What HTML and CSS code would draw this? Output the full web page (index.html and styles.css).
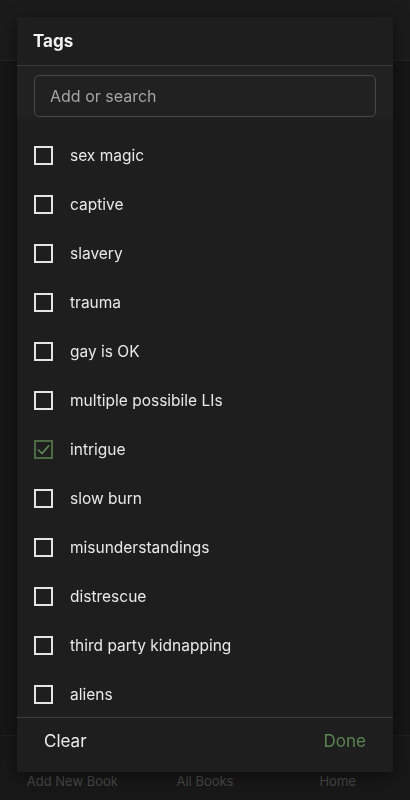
FILE: index.html
```html
<!DOCTYPE html>
<html>
<head>
    <link rel="stylesheet" href="styles.css">
</head>
<body>
    <div class="app">
        <div class="app-bar"></div>
        <div class="app-main"></div>
        <div class="bottom-nav">
            <div class="nav-link">Add New Book</div>
            <div class="nav-link">All Books</div>
            <div class="nav-link">Home</div>
        </div>
    </div>
    <div class="overlay">
        <div class="modal">
            <div class="modal-header">Tags</div>
            <div class="search-area">
                <div class="search-input">Add or search</div>
            </div>
            <div class="tag-list">
                <div class="tag"><span class="box"></span>sex magic</div>
                <div class="tag"><span class="box"></span>captive</div>
                <div class="tag"><span class="box"></span>slavery</div>
                <div class="tag"><span class="box"></span>trauma</div>
                <div class="tag"><span class="box"></span>gay is OK</div>
                <div class="tag"><span class="box"></span>multiple possibile LIs</div>
                <div class="tag"><span class="box checked"><svg width="15" height="15" viewBox="0 0 15 15"><path d="M2 7.5 L6 11.5 L13 3.5" fill="none" stroke="#5f8c57" stroke-width="1.6"/></svg></span>intrigue</div>
                <div class="tag"><span class="box"></span>slow burn</div>
                <div class="tag"><span class="box"></span>misunderstandings</div>
                <div class="tag"><span class="box"></span>distrescue</div>
                <div class="tag"><span class="box"></span>third party kidnapping</div>
                <div class="tag"><span class="box"></span>aliens</div>
            </div>
            <div class="modal-footer">
                <div class="btn-clear">Clear</div>
                <div class="btn-done">Done</div>
            </div>
        </div>
    </div>
</body>
</html>
```

FILE: styles.css
```css
body {
    margin: 0;
    padding: 0;
    background: #161616;
    font-family: Inter, "Noto Sans", sans-serif;
    width: 410px;
    height: 800px;
    overflow: hidden;
}

.app {
    display: flex;
    flex-direction: column;
    height: 800px;
}

.app-bar {
    height: 60px;
    background: #1b1b1b;
    border-bottom: 1px solid #242424;
}

.app-main {
    flex: 1;
    background: #161616;
}

.bottom-nav {
    height: 65px;
    background: #181818;
    border-top: 1px solid #202020;
    display: flex;
    justify-content: space-around;
    align-items: flex-end;
    padding: 0 6px 11px;
    box-sizing: border-box;
}

.nav-link {
    color: #4a4a4a;
    font-size: 13px;
    width: 120px;
    text-align: center;
}

.overlay {
    position: fixed;
    top: 0;
    left: 0;
    right: 0;
    bottom: 0;
}

.modal {
    position: absolute;
    top: 17px;
    left: 17px;
    width: 376px;
    height: 755px;
    background: #1e1e1e;
    display: flex;
    flex-direction: column;
    box-shadow: 0 4px 16px rgba(0, 0, 0, 0.5);
}

.modal-header {
    height: 49px;
    padding-left: 16px;
    display: flex;
    align-items: center;
    color: #f2f2f2;
    font-size: 17px;
    font-weight: 700;
    border-bottom: 1px solid #3a3a3a;
    box-sizing: border-box;
}

.search-area {
    background: #212121;
    padding: 9px 17px 1px;
}

.search-input {
    height: 42px;
    border: 1px solid #474747;
    border-radius: 5px;
    box-sizing: border-box;
    padding-left: 15px;
    display: flex;
    align-items: center;
    color: #a5a5a5;
    font-size: 16px;
}

.tag-list {
    flex: 1;
    overflow: hidden;
    padding-top: 13px;
    border-bottom: 1px solid #3c3c3c;
}

.tag {
    height: 49px;
    display: flex;
    align-items: center;
    padding-left: 17px;
    color: #e8e8e8;
    font-size: 15.5px;
}

.box {
    width: 19px;
    height: 19px;
    border: 2px solid #e4e4e4;
    box-sizing: border-box;
    margin-right: 17px;
    display: flex;
    align-items: center;
    justify-content: center;
}

.box.checked {
    border-color: #4b6b45;
}

.modal-footer {
    height: 54px;
    display: flex;
    align-items: center;
    justify-content: space-between;
    padding: 0 27px 8px;
    box-sizing: border-box;
    font-size: 17px;
}

.btn-clear {
    color: #ececec;
}

.btn-done {
    color: #5c8452;
}
```
